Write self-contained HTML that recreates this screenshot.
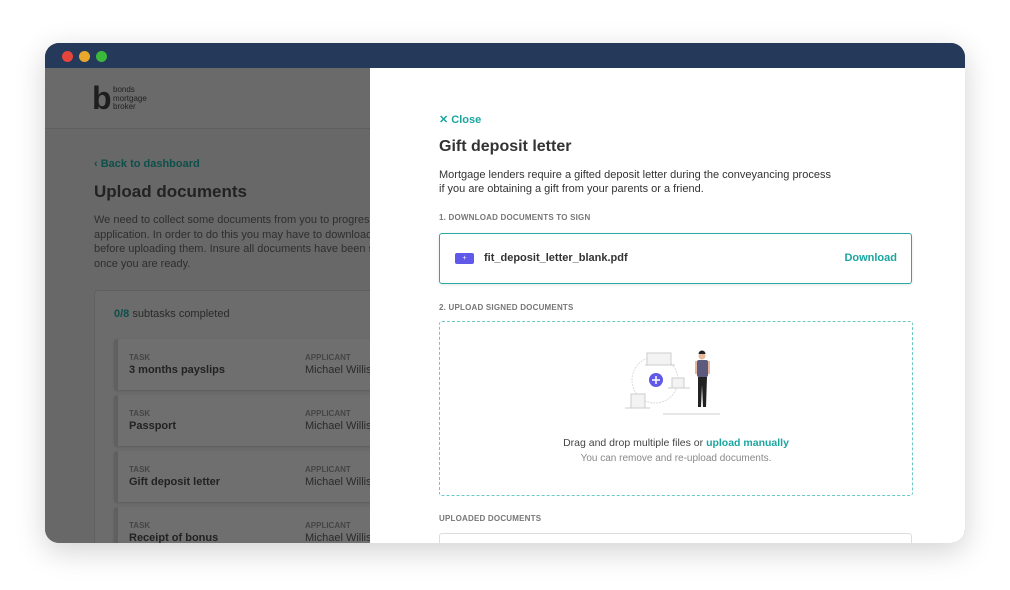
<!DOCTYPE html>
<html><head><style>
*{box-sizing:border-box;margin:0;padding:0}
body{width:1010px;height:590px;background:#fff;font-family:"Liberation Sans",sans-serif;position:relative;overflow:hidden}
.win{position:absolute;left:45px;top:43px;width:920px;height:500px;border-radius:14px;overflow:hidden;box-shadow:0 8px 30px rgba(0,0,0,.18);background:#6b6b6b}
.bar{height:25px;background:#253a5a;position:relative}
.dot{position:absolute;top:8px;width:11px;height:11px;border-radius:50%}
.left{position:absolute;left:0;top:25px;width:325px;height:475px;background:#686868;color:#2a2a2a}
.hdr{height:61px;border-bottom:1px solid #5e5e5e;position:relative;background:#6a6a6a}
.abs{position:absolute;white-space:nowrap}
.card{position:absolute;left:69px;width:270px;height:51px;background:#6f6f6f;border-left:4px solid #606060;border-radius:3px;box-shadow:0 1px 2px rgba(0,0,0,.15)}
.card .t{position:absolute;left:11px;top:14px;font-size:8px;font-weight:bold;color:#454545}
.card .n{position:absolute;left:11px;top:25px;font-size:11px;font-weight:bold;color:#222}
.card .a{position:absolute;left:187px;top:14px;font-size:8px;font-weight:bold;color:#454545}
.card .m{position:absolute;left:187px;top:25px;font-size:11px;color:#2a2a2a}
.panel{position:absolute;left:325px;top:25px;width:595px;height:475px;background:#fff;color:#333}
.teal{color:#1aa5a0}
.lbl{font-size:8px;font-weight:bold;color:#777;letter-spacing:.2px}
</style></head><body>
<div class="win">
<div class="bar"><div class="dot" style="left:17px;background:#e5453b"></div><div class="dot" style="left:34px;background:#e8a82b"></div><div class="dot" style="left:51px;background:#3bb93b"></div></div>
<div class="left">
<div class="hdr">
<div class="abs" style="left:47px;top:16px;font-size:32px;font-weight:bold;line-height:28px;color:#1e1e1e">b</div>
<div class="abs" style="left:68px;top:18px;font-size:8px;line-height:8.5px;color:#222">bonds<br>mortgage<br>broker</div>
</div>
<div class="abs" style="left:49px;top:90px;font-size:11px;font-weight:bold;color:#0d4f4b">‹ Back to dashboard</div>
<div class="abs" style="left:49px;top:114px;font-size:17px;font-weight:bold;color:#222">Upload documents</div>
<div class="abs" style="left:49px;top:145px;font-size:11px;line-height:14.5px;color:#2e2e2e">We need to collect some documents from you to progress<br>application. In order to do this you may have to download<br>before uploading them. Insure all documents have been s<br>once you are ready.</div>
<div class="abs" style="left:49px;top:222px;width:290px;height:260px;background:#6c6c6c;border:1px solid #606060;border-radius:4px"></div>
<div class="abs" style="left:69px;top:240px;font-size:11px;color:#2a2a2a"><b style="color:#0d4f4b">0/8</b> subtasks completed</div>
<div class="card" style="top:271px"><div class="t">TASK</div><div class="n">3 months payslips</div><div class="a">APPLICANT</div><div class="m">Michael Willis</div></div>
<div class="card" style="top:327px"><div class="t">TASK</div><div class="n">Passport</div><div class="a">APPLICANT</div><div class="m">Michael Willis</div></div>
<div class="card" style="top:383px"><div class="t">TASK</div><div class="n">Gift deposit letter</div><div class="a">APPLICANT</div><div class="m">Michael Willis</div></div>
<div class="card" style="top:439px"><div class="t">TASK</div><div class="n">Receipt of bonus</div><div class="a">APPLICANT</div><div class="m">Michael Willis</div></div>
</div>
<div class="panel">
<div class="abs teal" style="left:69px;top:45px;font-size:11px;font-weight:bold">✕ Close</div>
<div class="abs" style="left:69px;top:70px;font-size:16px;font-weight:bold;color:#333">Gift deposit letter</div>
<div class="abs" style="left:69px;top:100px;font-size:11px;line-height:14px;color:#333">Mortgage lenders require a gifted deposit letter during the conveyancing process<br>if you are obtaining a gift from your parents or a friend.</div>
<div class="abs lbl" style="left:69px;top:145px">1. DOWNLOAD DOCUMENTS TO SIGN</div>
<div class="abs" style="left:69px;top:165px;width:473px;height:51px;border:1px solid #2aa8a3;border-radius:3px;box-shadow:0 1px 3px rgba(0,0,0,.1)">
<div class="abs" style="left:15px;top:19px;width:19px;height:11px;background:#6058e8;border-radius:2px;color:#fff;font-size:7px;text-align:center;line-height:11px">+</div>
<div class="abs" style="left:44px;top:18px;font-size:11px;font-weight:bold;color:#333">fit_deposit_letter_blank.pdf</div>
<div class="abs teal" style="right:14px;top:18px;font-size:11px;font-weight:bold">Download</div>
</div>
<div class="abs lbl" style="left:69px;top:235px">2. UPLOAD SIGNED DOCUMENTS</div>
<div class="abs" style="left:69px;top:253px;width:474px;height:175px;border:1px dashed #6cc9c5;border-radius:3px"></div>
<svg class="abs" style="left:255px;top:280px" width="105" height="70" viewBox="0 0 105 70">
<circle cx="30" cy="32" r="23" fill="none" stroke="#ddd" stroke-dasharray="2 1"/>
<rect x="22" y="5" width="24" height="12" fill="#f3f3f3" stroke="#ccc"/>
<line x1="20" y1="17" x2="50" y2="17" stroke="#ccc"/>
<rect x="47" y="30" width="12" height="10" fill="#f3f3f3" stroke="#ccc"/>
<line x1="43" y1="40" x2="65" y2="40" stroke="#ccc"/>
<rect x="6" y="46" width="14" height="14" fill="#f3f3f3" stroke="#ccc"/>
<line x1="0" y1="60" x2="25" y2="60" stroke="#ccc"/>
<circle cx="31" cy="32" r="7" fill="#6058e8"/><path d="M31 28v8M27 32h8" stroke="#fff" stroke-width="1.5"/>
<line x1="38" y1="66" x2="95" y2="66" stroke="#ccc"/>
<circle cx="77" cy="8" r="3.5" fill="#e8b89a"/><path d="M73.5 6a3.5 3.5 0 0 1 7 0z" fill="#222"/>
<rect x="72" y="12" width="11" height="17" rx="2" fill="#5d5a7d"/>
<path d="M73 29h9l-1 30h-3l-1-22-1 22h-3z" fill="#222"/>
<rect x="70" y="13" width="2" height="13" fill="#e8b89a"/><rect x="83" y="13" width="2" height="13" fill="#e8b89a"/>
</svg>
<div class="abs" style="left:69px;top:369px;width:474px;text-align:center;font-size:10.5px;color:#444">Drag and drop multiple files or <b class="teal">upload manually</b></div>
<div class="abs" style="left:69px;top:385px;width:474px;text-align:center;font-size:10px;color:#888">You can remove and re-upload documents.</div>
<div class="abs lbl" style="left:69px;top:446px">UPLOADED DOCUMENTS</div>
<div class="abs" style="left:69px;top:465px;width:473px;height:30px;border:1px solid #ddd;border-radius:3px"></div>
</div>
</div>
</body></html>
